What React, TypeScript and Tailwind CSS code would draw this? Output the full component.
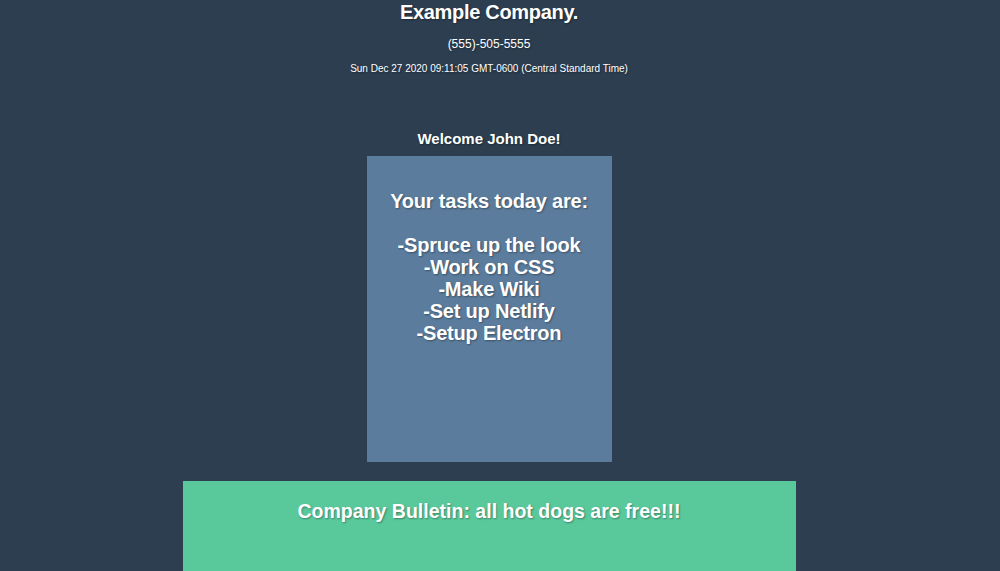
import React from "react";

const tasks = ["Spruce up the look", "Work on CSS", "Make Wiki", "Set up Netlify", "Setup Electron"];

export default function App() {
  return (
    <div className="min-h-[571px] bg-[#2c3e50] text-white font-['Liberation_Sans',Arial,sans-serif] [text-shadow:1px_1px_2px_rgba(0,0,0,0.35)]">
      <div className="w-[978px] flex flex-col items-center">
        {/* Header */}
        <h1 className="text-[20px] font-bold leading-6 tracking-[-0.3px]">Example Company.</h1>
        <p className="text-[12px] leading-4 mt-[12px]">(555)-505-5555</p>
        <p className="text-[10px] leading-4 mt-[9px]">Sun Dec 27 2020 09:11:05 GMT-0600 (Central Standard Time)</p>

        <h2 className="text-[15px] font-bold leading-5 mt-[52px]">Welcome John Doe!</h2>

        {/* Tasks card */}
        <div className="w-[245px] h-[306px] bg-[#5b7c9c] mt-[7px] flex flex-col items-center pt-[34px] font-bold text-[20px] leading-[22px] tracking-[-0.2px]">
          <p>Your tasks today are:</p>
          <div className="mt-[22px] flex flex-col items-center">
            {tasks.map((t) => (
              <p key={t}>-{t}</p>
            ))}
          </div>
        </div>

        {/* Bulletin */}
        <div className="w-[613px] h-[120px] bg-[#59c99b] mt-[19px] flex justify-center pt-[18px]">
          <p className="font-bold text-[21px] leading-6 scale-x-[0.93]">
            Company Bulletin: all hot dogs are free!!!
          </p>
        </div>
      </div>
    </div>
  );
}
